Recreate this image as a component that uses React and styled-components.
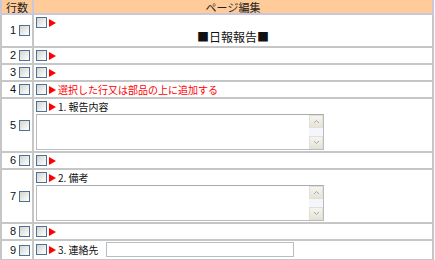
import React from "react";
import styled, { createGlobalStyle } from "styled-components";

const Global = createGlobalStyle`
  body {
    margin: 0;
    background: #fff;
    font-family: "Noto Sans CJK JP", "Noto Sans", sans-serif;
  }
`;

const Sheet = styled.table`
  width: 434px;
  border-collapse: collapse;
  table-layout: fixed;
  font-size: 10px;
  line-height: 11px;
  color: #111;
`;

const HeadCell = styled.th`
  width: ${(p) => p.$w || "auto"};
  height: 12px;
  padding: 1px 0 0;
  background: #ffcc99;
  border: 2px solid #c8c8da;
  border-top: 0;
  font-weight: normal;
  font-size: 11px;
  line-height: 12px;
  color: #222;
`;

const NumCell = styled.td`
  border: 2px solid #c6c6c6;
  padding: 0 2px 0 0;
  vertical-align: middle;
`;

const NumWrap = styled.div`
  display: flex;
  align-items: center;
  justify-content: flex-end;
  gap: 3px;
  height: 11px;
`;

const Num = styled.span`
  font-family: "Liberation Sans", Arial, sans-serif;
  font-size: 11px;
  line-height: 11px;
`;

const BodyCell = styled.td`
  border: 2px solid #c6c6c6;
  padding: ${(p) => (p.$pad === "field" ? "1px 2px 2px" : p.$pad === "block" ? "2px 2px 1px" : "2px 2px 2px")};
  vertical-align: top;
`;

const Line = styled.div`
  display: flex;
  align-items: center;
  height: ${(p) => (p.$field ? "15px" : "11px")};
  gap: 2px;
`;

const Check = styled.span`
  display: block;
  box-sizing: border-box;
  width: 11px;
  height: 11px;
  border: 1px solid #4d6f98;
  background: linear-gradient(135deg, #d4d4cc 0%, #eeeeea 60%, #fff 100%);
  flex: none;
`;

const Arrow = styled.span`
  display: block;
  width: 0;
  height: 0;
  border-top: 4px solid transparent;
  border-bottom: 4px solid transparent;
  border-left: 7px solid #ff0000;
  flex: none;
`;

const Label = styled.span`
  font-size: 10px;
  line-height: 11px;
  color: ${(p) => (p.$warn ? "#ff0000" : "#111")};
  white-space: nowrap;
`;

const Title = styled.div`
  text-align: center;
  font-size: 12px;
  line-height: 17px;
`;

const TextBox = styled.div`
  display: flex;
  box-sizing: border-box;
  width: 288px;
  height: 36px;
  margin-top: 2px;
  border: 1px solid #b9bdc1;
  border-top-color: #a8acb0;
  background: #fff;
`;

const Area = styled.textarea`
  flex: 1;
  border: 0;
  padding: 0;
  resize: none;
  outline: none;
  background: transparent;
`;

const Track = styled.div`
  width: 14px;
  display: flex;
  flex-direction: column;
  justify-content: space-between;
  background: #f4f6fb;
`;

const ScrollBtn = styled.div`
  height: 13px;
  box-sizing: border-box;
  border: 1px solid #e2e0d6;
  background: linear-gradient(180deg, #f6f5ef, #e6e3d6);
  display: flex;
  align-items: center;
  justify-content: center;
`;

const Field = styled.input`
  box-sizing: border-box;
  width: 188px;
  height: 15px;
  margin-left: 5px;
  border: 1px solid #b9bdc1;
  padding: 0;
`;

const Chevron = ({ up }) => (
  <svg width="7" height="5" viewBox="0 0 7 5">
    <polyline
      points={up ? "1,4 3.5,1.5 6,4" : "1,1 3.5,3.5 6,1"}
      fill="none"
      stroke="#a3a9b4"
      strokeWidth="1"
    />
  </svg>
);

const Memo = () => (
  <TextBox>
    <Area />
    <Track>
      <ScrollBtn>
        <Chevron up />
      </ScrollBtn>
      <ScrollBtn>
        <Chevron />
      </ScrollBtn>
    </Track>
  </TextBox>
);

const rows = [
  { n: 1, title: "■日報報告■" },
  { n: 2 },
  { n: 3 },
  { n: 4, text: "選択した行又は部品の上に追加する", warn: true },
  { n: 5, text: "1. 報告内容", memo: true },
  { n: 6 },
  { n: 7, text: "2. 備考", memo: true },
  { n: 8 },
  { n: 9, text: "3. 連絡先", field: true },
];

function Row({ row }) {
  const pad = row.field ? "field" : row.title || row.memo ? "block" : "line";
  return (
    <tr>
      <NumCell>
        <NumWrap>
          <Num>{row.n}</Num>
          <Check />
        </NumWrap>
      </NumCell>
      <BodyCell $pad={pad}>
        <Line $field={row.field}>
          <Check />
          <Arrow />
          {row.text && <Label $warn={row.warn}>{row.text}</Label>}
          {row.field && <Field />}
        </Line>
        {row.title && <Title>{row.title}</Title>}
        {row.memo && <Memo />}
      </BodyCell>
    </tr>
  );
}

export default function App() {
  return (
    <>
      <Global />
      <Sheet>
        <thead>
          <tr>
            <HeadCell $w="30px">行数</HeadCell>
            <HeadCell>ページ編集</HeadCell>
          </tr>
        </thead>
        <tbody>
          {rows.map((r) => (
            <Row key={r.n} row={r} />
          ))}
        </tbody>
      </Sheet>
    </>
  );
}
